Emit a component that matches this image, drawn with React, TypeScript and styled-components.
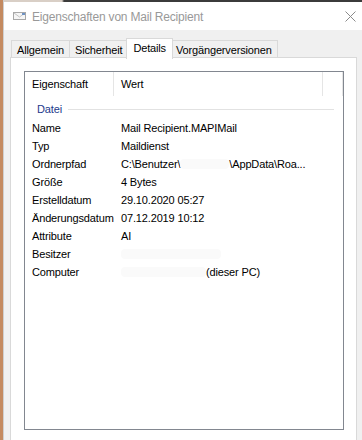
import React from 'react'
import styled, { createGlobalStyle } from 'styled-components'

const GlobalStyle = createGlobalStyle`
  html, body {
    margin: 0;
    padding: 0;
    background: #c48a60;
  }
  body {
    font-family: 'Liberation Sans', Arial, sans-serif;
    font-size: 11px;
    letter-spacing: -0.15px;
    color: #000;
  }
`

type Row = { name: string; value?: string; parts?: string[] }

const rows: Row[] = [
  { name: 'Name', value: 'Mail Recipient.MAPIMail' },
  { name: 'Typ', value: 'Maildienst' },
  { name: 'Ordnerpfad', parts: ['C:\\Benutzer\\', '\\AppData\\Roa...'] },
  { name: 'Größe', value: '4 Bytes' },
  { name: 'Erstelldatum', value: '29.10.2020 05:27' },
  { name: 'Änderungsdatum', value: '07.12.2019 10:12' },
  { name: 'Attribute', value: 'AI' },
  { name: 'Besitzer', value: '' },
  { name: 'Computer', parts: ['', '(dieser PC)'] },
]

const tabs = ['Allgemein', 'Sicherheit', 'Details', 'Vorgängerversionen']

const App = () => {
  return (
    <>
      <GlobalStyle />
      <Desktop>
        <Window>
          <TopStrip />
          <TitleBar>
            <TitleIcon width="13" height="8" viewBox="0 0 13 8">
              <rect x="0.5" y="0.5" width="12" height="7" fill="#f6f6f6" stroke="#a8a8a8" />
              <path d="M1 1 L6.5 5 L12 1" fill="none" stroke="#c4c4c4" />
              <rect x="9" y="1" width="3" height="2" fill="#6f93c4" />
            </TitleIcon>
            <Title>Eigenschaften von Mail Recipient</Title>
            <CloseIcon width="11" height="11" viewBox="0 0 11 11">
              <path d="M0.5 0.5 L10.5 10.5 M10.5 0.5 L0.5 10.5" stroke="#8a8a8a" strokeWidth="1" />
            </CloseIcon>
          </TitleBar>
          <Body>
            <TabRow>
              {tabs.map((t) => (
                <Tab key={t} $active={t === 'Details'}>
                  {t}
                </Tab>
              ))}
            </TabRow>
            <Panel>
              <ListBox>
                <HeaderRow>
                  <HeaderCell $width={89}>Eigenschaft</HeaderCell>
                  <HeaderCell $width={209}>Wert</HeaderCell>
                  <HeaderCell $width={20} />
                </HeaderRow>
                <Group>
                  <GroupLabel>Datei</GroupLabel>
                  <GroupLine />
                </Group>
                {rows.map((r) => (
                  <ItemRow key={r.name}>
                    <NameCell>{r.name}</NameCell>
                    <ValueCell>
                      {r.parts ? (
                        <>
                          <span>{r.parts[0]}</span>
                          <Blur $width={r.name === 'Computer' ? 85 : 49} />
                          <span>{r.parts[1]}</span>
                        </>
                      ) : r.name === 'Besitzer' ? (
                        <Blur $width={100} />
                      ) : (
                        r.value
                      )}
                    </ValueCell>
                  </ItemRow>
                ))}
              </ListBox>
            </Panel>
          </Body>
        </Window>
      </Desktop>
    </>
  )
}

const Desktop = styled.div`
  width: 362px;
  height: 440px;
  display: flex;
  padding-left: 3px;
  box-sizing: border-box;
  overflow: hidden;
`

const Window = styled.div`
  flex: 1;
  display: flex;
  flex-direction: column;
  background: #f0f0f0;
  border-left: 1px solid #cfcfcf;
`

const TopStrip = styled.div`
  height: 2px;
  background: linear-gradient(to right, #d9cfc6 58px, #3b3b3b 60px);
`

const TitleBar = styled.div`
  height: 28px;
  background: #fff;
  display: flex;
  align-items: center;
  padding: 1px 7px 0 9px;
  box-sizing: border-box;
`

const TitleIcon = styled.svg`
  flex: none;
  margin-right: 6px;
  margin-top: -2px;
`

const Title = styled.div`
  flex: 1;
  font-size: 12px;
  color: #999;
  letter-spacing: -0.2px;
`

const CloseIcon = styled.svg`
  flex: none;
`

const Body = styled.div`
  flex: 1;
  display: flex;
  flex-direction: column;
  padding: 8px 6px 0 6px;
`

const TabRow = styled.div`
  display: flex;
  align-items: flex-end;
  height: 20px;
  padding-left: 1px;
  position: relative;
  z-index: 1;
`

const Tab = styled.div<{ $active?: boolean }>`
  height: ${(p) => (p.$active ? '21px' : '18px')};
  line-height: ${(p) => (p.$active ? '19px' : '18px')};
  padding: 0 ${(p) => (p.$active ? '6px' : '5px')};
  margin: ${(p) => (p.$active ? '0 -2px -1px' : '0')};
  background: ${(p) => (p.$active ? '#fff' : '#f0f0f0')};
  border: 1px solid #d9d9d9;
  border-bottom: ${(p) => (p.$active ? 'none' : '1px solid #d9d9d9')};
  border-left: ${(p) => (p.$active ? '1px solid #d9d9d9' : 'none')};
  font-size: 11px;
  box-sizing: border-box;
  position: relative;
  z-index: ${(p) => (p.$active ? 2 : 1)};

  &:first-child {
    border-left: 1px solid #d9d9d9;
  }
`

const Panel = styled.div`
  flex: 1;
  background: #fff;
  border: 1px solid #d9d9d9;
  border-bottom: none;
  margin-top: -1px;
  padding: 13px 12px 10px 13px;
  display: flex;
  flex-direction: column;
`

const ListBox = styled.div`
  flex: 1;
  border: 1px solid #828790;
  background: #fff;
`

const HeaderRow = styled.div`
  display: flex;
  height: 24px;
`

const HeaderCell = styled.div<{ $width: number }>`
  width: ${(p) => p.$width}px;
  flex: none;
  padding-left: 7px;
  box-sizing: border-box;
  border-right: 1px solid #e5e5e5;
  line-height: 24px;
`

const Group = styled.div`
  display: flex;
  align-items: center;
  height: 20px;
  padding-left: 12px;
  margin-top: 3px;
`

const GroupLabel = styled.span`
  color: #1e3a8c;
  margin-right: 6px;
`

const GroupLine = styled.div`
  flex: 1;
  height: 1px;
  background: #e2e2e2;
  margin-right: 9px;
`

const ItemRow = styled.div`
  display: flex;
  height: 18px;
  line-height: 18px;
`

const NameCell = styled.div`
  width: 89px;
  flex: none;
  padding-left: 7px;
  box-sizing: border-box;
  white-space: nowrap;
`

const ValueCell = styled.div`
  flex: 1;
  padding-left: 7px;
  display: flex;
  white-space: nowrap;
`

const Blur = styled.span<{ $width: number }>`
  display: inline-block;
  width: ${(p) => p.$width}px;
  height: 10px;
  margin-top: 4px;
  background: #fafafa;
  border-radius: 4px;
`

export default App
